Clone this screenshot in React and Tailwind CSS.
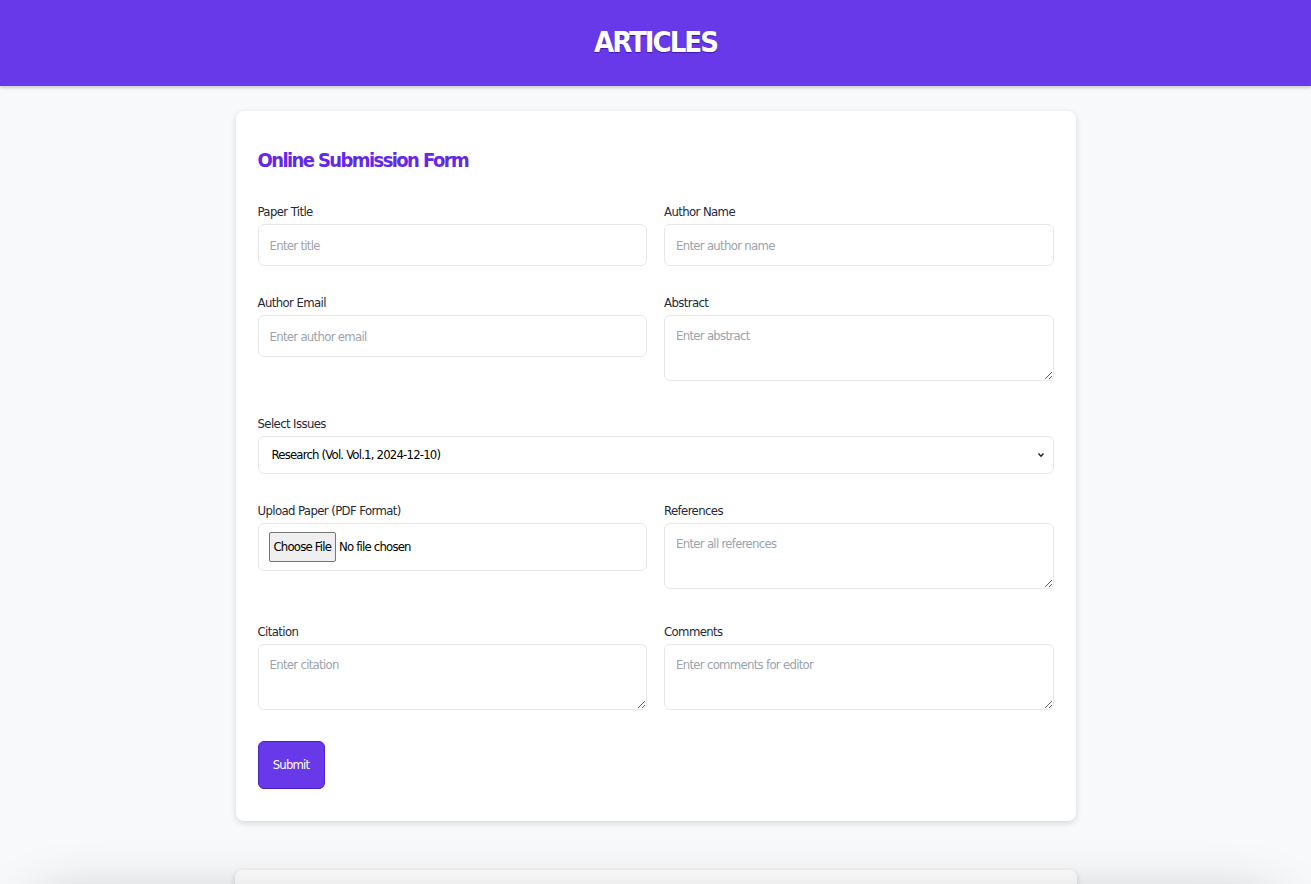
import React from "react";

const Label = ({ children }) => (
  <label className="block text-[13px] tracking-[-0.6px] leading-[20px] text-[#1f2937] mb-[2px]">{children}</label>
);

const inputCls =
  "block w-full h-[42px] rounded-md border border-[#e5e7eb] bg-white px-[11px] text-[13px] tracking-[-0.7px] text-[#111827] placeholder:text-[#9ca3af] outline-none";
const areaCls =
  "block w-full h-[66px] rounded-md border border-[#e5e7eb] bg-white px-[11px] pt-[10px] text-[13px] tracking-[-0.7px] leading-[20px] text-[#111827] placeholder:text-[#9ca3af] outline-none mb-[6px]";

export default function App() {
  return (
    <div className="min-h-screen overflow-hidden bg-[#f8f9fb] font-['DejaVu_Sans_Condensed','DejaVu_Sans',sans-serif]">
      <header className="h-[86px] bg-[#6739e8] flex items-center justify-center shadow-[0_2px_3px_rgba(0,0,0,0.18)] relative z-10">
        <h1 className="text-[29px] font-bold text-white tracking-[-2px] [text-shadow:0_1px_1px_rgba(40,0,140,0.6)]">ARTICLES</h1>
      </header>
      <main className="pt-[25px] pb-[40px]">
        <div className="mx-auto w-[840px] bg-white rounded-lg shadow-[0_2px_6px_rgba(0,0,0,0.14)] px-[22px] pt-[35px] pb-[32px]">
          <h2 className="text-[20px] leading-[28px] font-bold text-[#6428e8] tracking-[-1.6px] mb-[28px]">Online Submission Form</h2>
          <form onSubmit={(e) => e.preventDefault()}>
            <div className="grid grid-cols-2 gap-x-[17px] items-start mb-[27px]">
              <div>
                <Label>Paper Title</Label>
                <input className={inputCls} placeholder="Enter title" />
              </div>
              <div>
                <Label>Author Name</Label>
                <input className={inputCls} placeholder="Enter author name" />
              </div>
            </div>
            <div className="grid grid-cols-2 gap-x-[17px] items-start mb-[27px]">
              <div>
                <Label>Author Email</Label>
                <input className={inputCls} placeholder="Enter author email" />
              </div>
              <div>
                <Label>Abstract</Label>
                <textarea className={areaCls} placeholder="Enter abstract" />
              </div>
            </div>
            <div className="mb-[27px]">
              <Label>Select Issues</Label>
              <div className="relative">
                <select className="block w-full h-[38px] appearance-none rounded-md border border-[#e5e7eb] bg-white pl-[13px] text-[13px] tracking-[-0.8px] text-black outline-none">
                  <option>Research (Vol. Vol.1, 2024-12-10)</option>
                </select>
                <svg className="absolute right-[9px] top-[15px] w-[8px] h-[8px] pointer-events-none" viewBox="0 0 8 8">
                  <path d="M1.5 2.5 L4 5.2 L6.5 2.5" fill="none" stroke="#222" strokeWidth="1.4" />
                </svg>
              </div>
            </div>
            <div className="grid grid-cols-2 gap-x-[17px] items-start mb-[27px]">
              <div>
                <Label>Upload Paper (PDF Format)</Label>
                <div className="h-[48px] rounded-md border border-[#e5e7eb] bg-white flex items-center px-[10px]">
                  <input
                    type="file"
                    accept="application/pdf"
                    className="text-[13px] tracking-[-0.8px] text-black file:mr-[3px] file:h-[30px] file:px-[4px] file:border file:border-[#767676] file:rounded-[2px] file:bg-[#efefef] file:text-[13px] file:tracking-[-0.8px] file:text-black file:font-['DejaVu_Sans_Condensed',sans-serif]"
                  />
                </div>
              </div>
              <div>
                <Label>References</Label>
                <textarea className={areaCls} placeholder="Enter all references" />
              </div>
            </div>
            <div className="grid grid-cols-2 gap-x-[17px] items-start mb-[25px]">
              <div>
                <Label>Citation</Label>
                <textarea className={areaCls} placeholder="Enter citation" />
              </div>
              <div>
                <Label>Comments</Label>
                <textarea className={areaCls} placeholder="Enter comments for editor" />
              </div>
            </div>
            <button
              type="submit"
              className="h-[48px] w-[67px] rounded-md border border-[#4a22c4] bg-[#6739e8] text-[13px] tracking-[-0.8px] text-white"
            >
              Submit
            </button>
          </form>
        </div>
        <div className="mt-[49px] mx-auto w-[842px] h-[200px] bg-white rounded-lg shadow-[0_2px_6px_rgba(0,0,0,0.14)]" />
      </main>
      <div className="fixed left-[30px] right-[30px] bottom-[-80px] h-[60px] rounded-[60px] shadow-[0_0_60px_rgba(0,0,0,0.28)] pointer-events-none" />
    </div>
  );
}
